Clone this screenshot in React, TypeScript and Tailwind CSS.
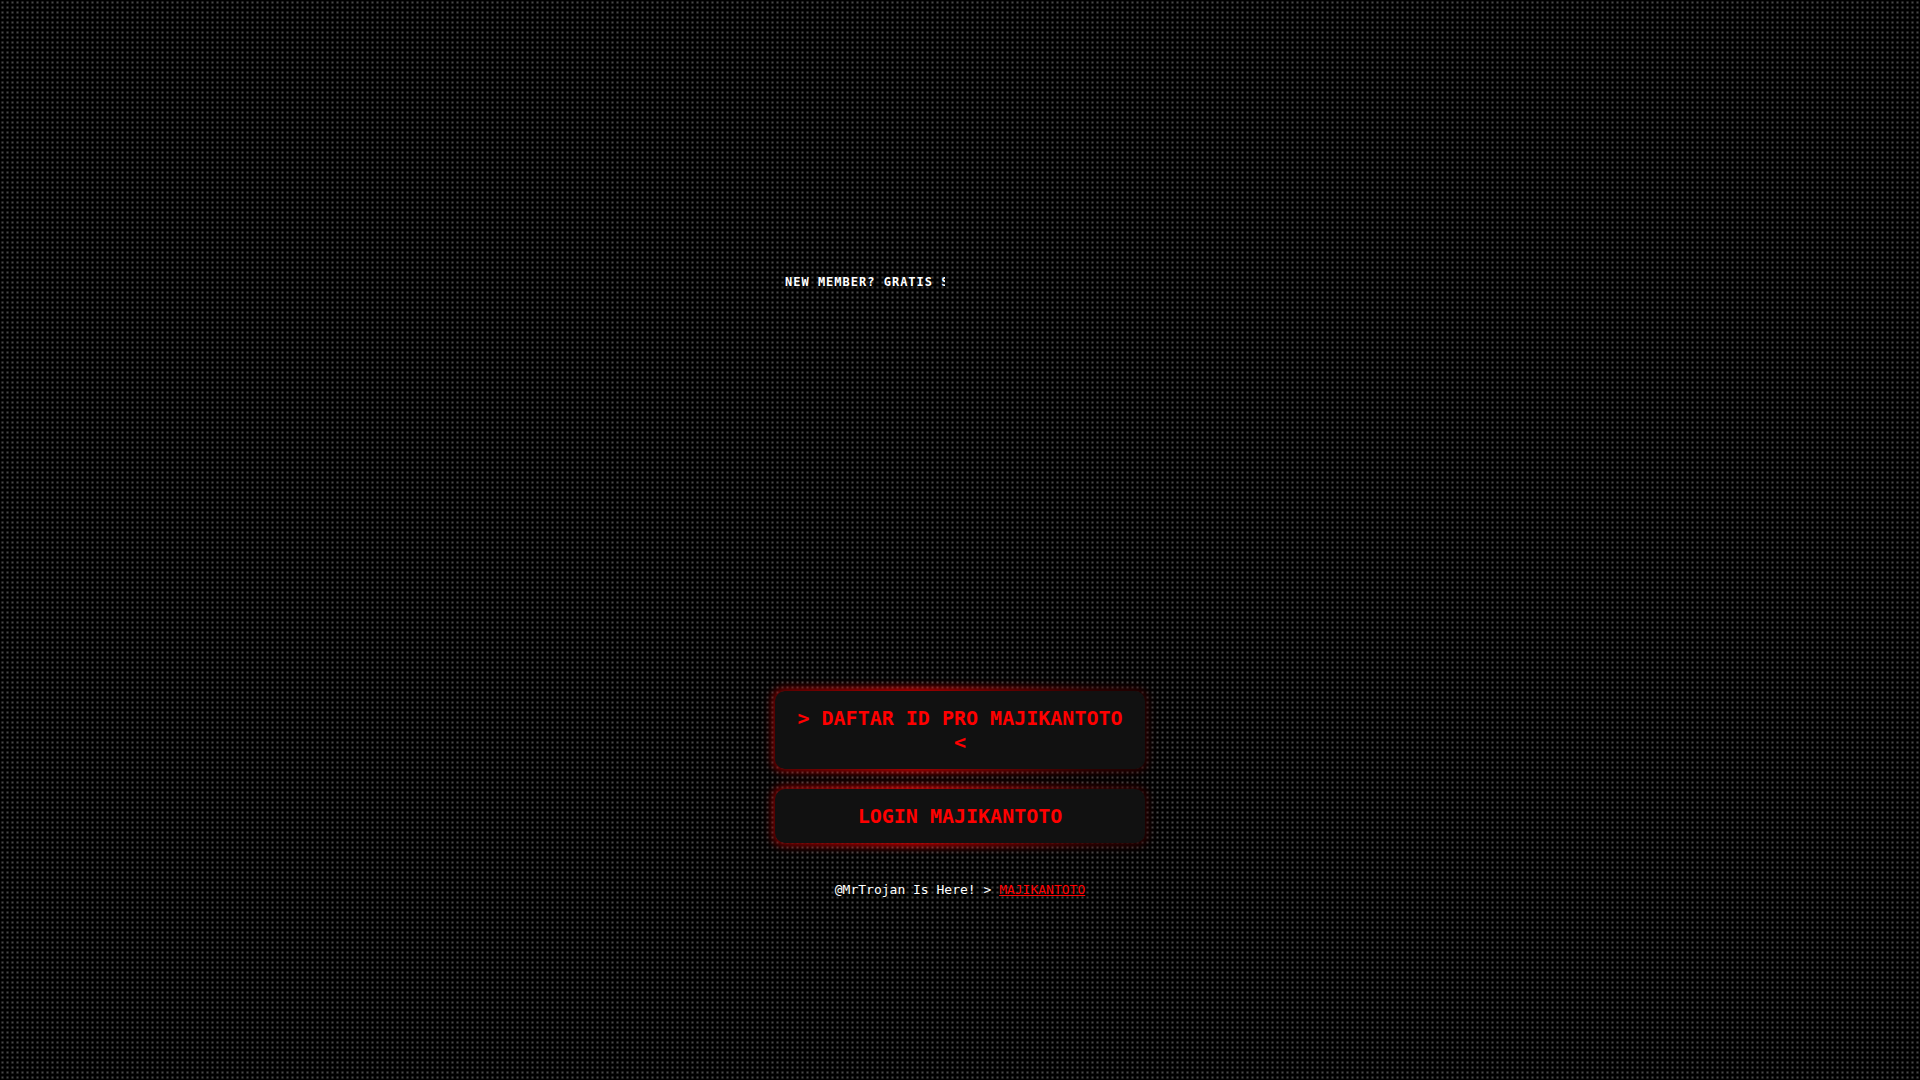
const links = ["> DAFTAR ID PRO MAJIKANTOTO <", "LOGIN MAJIKANTOTO"];

function GlowButton({ label }: { label: string }) {
  return (
    <div className="relative isolate w-full">
      <div className="absolute -inset-0.5 -z-10 rounded-[10px] bg-[linear-gradient(90deg,#8a0000_0%,#ff0000_37%,#480000_85%,#300000_100%)] blur-[5px]" />
      <button
        type="button"
        className="w-full cursor-pointer rounded-[10px] bg-[#111] p-[15px] text-center text-[20px] leading-6 font-bold text-[#ff0000]"
      >
        {label}
      </button>
    </div>
  );
}

export default function App() {
  return (
    <div className="flex min-h-screen flex-col items-center justify-center bg-black bg-[radial-gradient(#484848,#000_2px)] bg-[length:5px_5px] pt-[93px] font-['DejaVu_Sans_Mono',monospace] text-white">
      <main className="flex w-full max-w-[370px] flex-col gap-5">
        <p className="ml-[10px] w-[160px] overflow-hidden text-[12px] leading-[14px] font-bold tracking-[1px] whitespace-nowrap">
          NEW MEMBER? GRATIS S
        </p>
        <div className="h-[362px]" />
        {links.map((label) => (
          <GlowButton key={label} label={label} />
        ))}
        <p className="mt-[19px] text-center text-[13px] leading-4">
          @MrTrojan Is Here! &gt;{" "}
          <a href="#" className="text-[#ff0000] underline decoration-1">
            MAJIKANTOTO
          </a>
        </p>
      </main>
    </div>
  );
}
